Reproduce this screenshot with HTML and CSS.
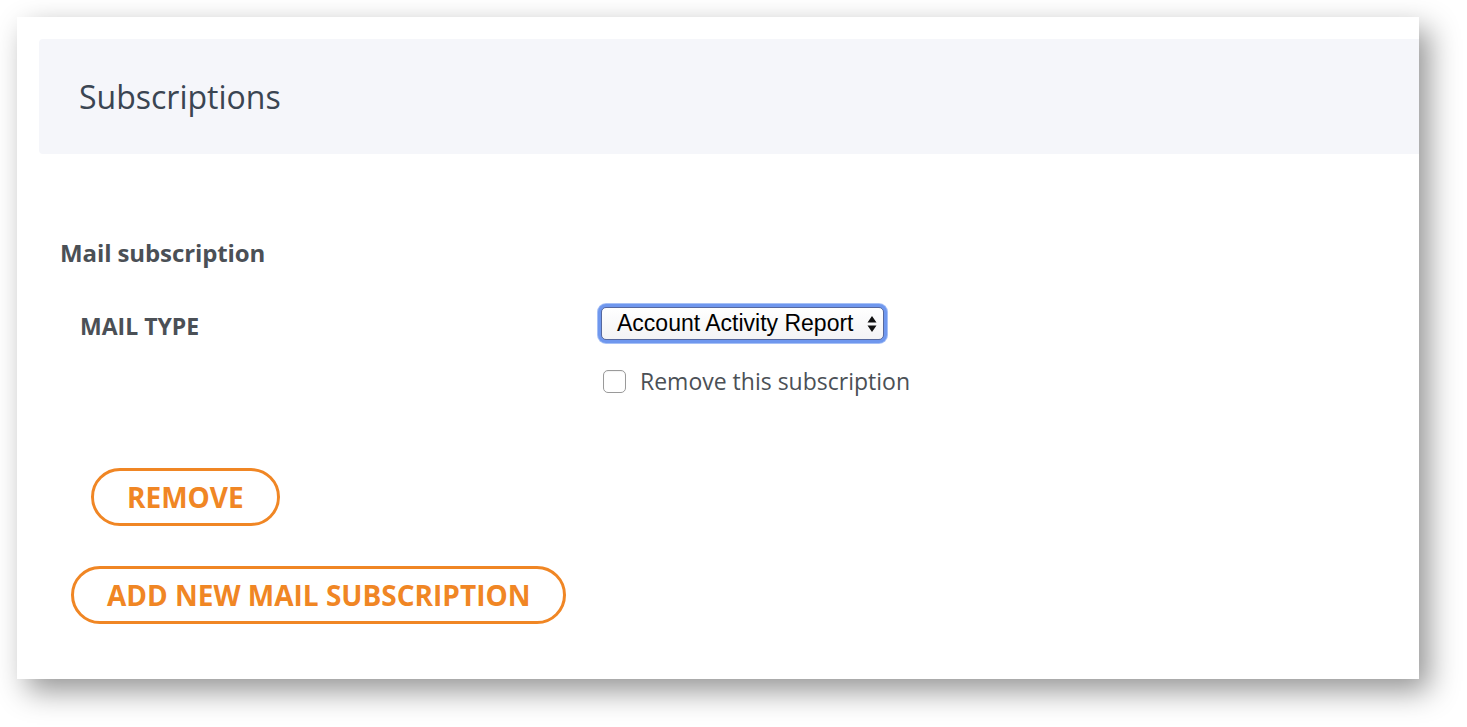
FILE: index.html
```html
<!DOCTYPE html>
<html>
<head>
<meta charset="utf-8">
<link rel="stylesheet" href="styles.css">
</head>
<body>
<div class="card">
  <div class="card-header"><h1 class="title">Subscriptions</h1></div>
  <div class="card-body">
    <h2 class="section-title">Mail subscription</h2>
    <div class="form-row">
      <div class="field-label">MAIL TYPE</div>
      <div class="field-control">
        <div class="select-ring">
          <div class="select">
            <span class="select-text">Account Activity Report</span>
            <svg class="select-arrows" width="10" height="18" viewBox="0 0 10 18"><path d="M5 1 L9.5 7.5 L0.5 7.5 Z M5 17 L9.5 10.5 L0.5 10.5 Z" fill="#111"/></svg>
          </div>
        </div>
        <label class="check">
          <span class="checkbox"></span>
          <span class="check-text">Remove this subscription</span>
        </label>
      </div>
    </div>
    <div class="btn-row remove-row"><button class="btn btn-remove">REMOVE</button></div>
    <div class="btn-row add-row"><button class="btn btn-add">ADD NEW MAIL SUBSCRIPTION</button></div>
  </div>
</div>
</body>
</html>
```
FILE: styles.css
```css
html, body { margin: 0; padding: 0; background: #ffffff; }
body {
  padding: 17px;
  min-height: 727px;
  box-sizing: border-box;
  font-family: "Open Sans", "DejaVu Sans", sans-serif;
}
.card {
  width: 1402px;
  height: 662px;
  box-sizing: border-box;
  background: #fff;
  box-shadow: 10px 12px 28px rgba(0,0,0,0.42);
  padding: 22px 0 0 22px;
}
.card-header {
  height: 115px;
  box-sizing: border-box;
  background: #f5f6fa;
  border-radius: 4px 0 0 4px;
  padding-left: 40px;
  display: flex;
  align-items: center;
}
.title {
  margin: 0;
  font-weight: 400;
  font-size: 32px;
  color: #3a4552;
}
.card-body { padding-left: 21px; }
.section-title {
  margin: 84px 0 0 0;
  font-size: 24px;
  line-height: 30px;
  font-weight: 700;
  color: #4b5056;
  letter-spacing: -0.1px;
}
.form-row {
  display: grid;
  grid-template-columns: 538px auto;
  margin-top: 36px;
}
.field-label {
  padding-left: 20px;
  padding-top: 7px;
  font-size: 23px;
  font-weight: 700;
  color: #4b5056;
  line-height: 30px;
}
.field-control { display: flex; flex-direction: column; align-items: flex-start; }
.select-ring {
  padding: 3px;
  border-radius: 8px;
  background: #6f97ee;
  box-shadow: 0 0 0 1px #a6c0f6;
}
.select {
  width: 283px;
  height: 33px;
  box-sizing: border-box;
  background: linear-gradient(#ffffff, #f3f3f5);
  border: 1px solid #56689e;
  border-radius: 5px;
  display: flex;
  align-items: center;
  justify-content: space-between;
  padding: 0 6px 0 15px;
  font-family: "Liberation Sans", Arial, sans-serif;
  font-size: 23px;
  color: #000;
}
.select-arrows { display: block; }
.check {
  display: flex;
  align-items: center;
  margin-top: 23px;
  margin-left: 5px;
}
.checkbox {
  width: 21px;
  height: 21px;
  border: 1px solid #9a9a9a;
  border-radius: 5px;
  background: #fff;
  box-shadow: inset 0 1px 1px rgba(0,0,0,0.05);
}
.check-text {
  margin-left: 14px;
  font-size: 23px;
  line-height: 31px;
  color: #4b5056;
}
.btn-row { display: flex; }
.remove-row { margin-top: 71px; padding-left: 31px; }
.add-row { margin-top: 40px; padding-left: 11px; }
.btn {
  font-family: "Open Sans", "DejaVu Sans", sans-serif;
  font-weight: 700;
  font-size: 28px;
  color: #f08624;
  background: #fff;
  border: 3px solid #f08624;
  border-radius: 29px;
  height: 58px;
  padding: 0 33px;
  line-height: 1;
  cursor: pointer;
}
```
